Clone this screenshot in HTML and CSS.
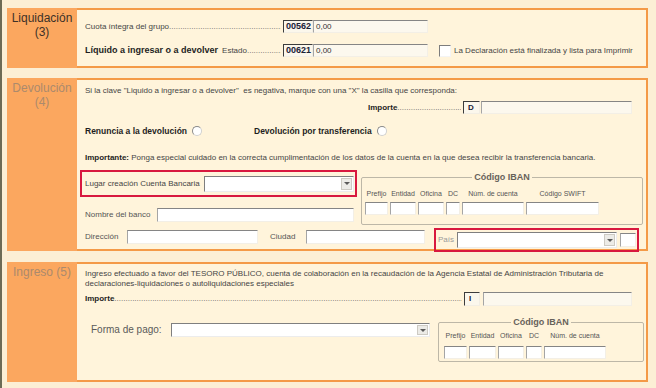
FILE: index.html
```html
<!DOCTYPE html>
<html>
<head>
  <meta charset="utf-8">
  <title>Liquidación, devolución e ingreso</title>
  <link rel="stylesheet" href="styles.css">
</head>
<body>
<div class="page">

  <div class="block">
    <div class="side">Liquidación<br>(3)</div>
    <div class="panel p-liq">
      <div class="row">
        <div class="lead"><span>Cuota íntegra del grupo</span><span class="dots"></span></div>
        <span class="code">00562</span>
        <span class="fld w-val">0,00</span>
      </div>
      <div class="row">
        <div class="lead"><b class="big">Líquido a ingresar o a devolver</b><span class="estado">Estado</span><span class="dots"></span></div>
        <span class="code">00621</span>
        <span class="fld w-val">0,00</span>
        <span class="check"></span>
        <span>La Declaración está finalizada y lista para Imprimir</span>
      </div>
    </div>
  </div>

  <div class="block">
    <div class="side off">Devolución<br>(4)</div>
    <div class="panel p-dev">
      <p class="line">Si la clave "Liquido a ingresar o a devolver" &nbsp;es negativa, marque con una "X" la casilla que corresponda:</p>
      <div class="row imp-dev">
        <div class="lead lead-dev"><b>Importe</b><span class="dots"></span></div>
        <span class="key">D</span>
        <span class="fld w-imp"></span>
      </div>
      <div class="row radios">
        <div class="opt"><b>Renuncia a la devolución</b><span class="radio"></span></div>
        <div class="opt"><b>Devolución por transferencia</b><span class="radio"></span></div>
      </div>
      <p class="line note"><b>Importante:</b> Ponga especial cuidado en la correcta cumplimentación de los datos de la cuenta en la que desea recibir la transferencia bancaria.</p>
      <div class="bank">
        <div class="bank-left">
          <div class="mark lugar">
            <span class="lbl-lugar">Lugar creación Cuenta Bancaria</span>
            <div class="select w-lugar"><span class="arrow"></span></div>
          </div>
          <div class="row nombre">
            <span class="soft lbl-nombre">Nombre del banco</span>
            <span class="fld white w-nombre"></span>
          </div>
        </div>
        <fieldset class="iban iban-dev">
          <legend>Código IBAN</legend>
          <div class="cols">
            <div class="col c-pre"><span>Prefijo</span><span class="fld white"></span></div>
            <div class="col c-ent"><span>Entidad</span><span class="fld white"></span></div>
            <div class="col c-ofi"><span>Oficina</span><span class="fld white"></span></div>
            <div class="col c-dc"><span>DC</span><span class="fld white"></span></div>
            <div class="col c-num"><span>Núm. de cuenta</span><span class="fld white"></span></div>
            <div class="col c-swift"><span>Código SWIFT</span><span class="fld white"></span></div>
          </div>
        </fieldset>
      </div>
      <div class="row dir">
        <span class="soft lbl-dir">Dirección</span>
        <span class="fld white w-dir"></span>
        <span class="soft lbl-ciu">Ciudad</span>
        <span class="fld white w-ciu"></span>
        <div class="mark pais">
          <span class="lbl-pais">País</span>
          <div class="select w-pais"><span class="arrow"></span></div>
          <span class="fld white w-pc"></span>
        </div>
      </div>
    </div>
  </div>

  <div class="block b-ing">
    <div class="side off">Ingreso (5)</div>
    <div class="panel p-ing">
      <p class="line">Ingreso efectuado a favor del TESORO PÚBLICO, cuenta de colaboración en la recaudación de la Agencia Estatal de Administración Tributaria de<br>declaraciones-liquidaciones o autoliquidaciones especiales</p>
      <div class="row imp-ing">
        <div class="lead lead-ing"><b>Importe</b><span class="dots"></span></div>
        <span class="key key-i">I</span>
        <span class="fld w-imp-i"></span>
      </div>
      <div class="pay">
        <div class="row forma">
          <span class="lbl-forma">Forma de pago:</span>
          <div class="select w-forma"><span class="arrow"></span></div>
        </div>
        <fieldset class="iban iban-ing">
          <legend>Código IBAN</legend>
          <div class="cols">
            <div class="col c-pre"><span>Prefijo</span><span class="fld white"></span></div>
            <div class="col c-ent2"><span>Entidad</span><span class="fld white"></span></div>
            <div class="col c-ofi2"><span>Oficina</span><span class="fld white"></span></div>
            <div class="col c-dc2"><span>DC</span><span class="fld white"></span></div>
            <div class="col c-num"><span>Núm. de cuenta</span><span class="fld white"></span></div>
          </div>
        </fieldset>
      </div>
    </div>
  </div>

</div>
</body>
</html>
```

FILE: styles.css
```css
* {
  box-sizing: border-box;
}
body {
  margin: 0;
  background-color: #fcefd5;
  font-family: "Liberation Sans", Arial, sans-serif;
  font-size: 8px;
  line-height: 10px;
  color: #454545;
}
b {
  font-weight: bold;
  color: #1e1e1e;
}
.page {
  border-left: 2px solid #6d6b55;
  height: 388px;
  padding: 8px 0 0 5px;
}

/* bloques: etiqueta naranja + panel */
.block {
  display: flex;
  width: 641px;
}
.block + .block {
  margin-top: 10px;
}
.block.b-ing {
  margin-top: 11px;
}
.side {
  flex: none;
  width: 70px;
  padding-top: 3px;
  background-color: #fba75f;
  color: #3d3128;
  font-size: 12px;
  line-height: 14px;
  text-align: center;
}
.side.off {
  color: #ab8a6d;
}
.panel {
  flex: 1;
  background-color: #fff4db;
  border: 2px solid #f49a47;
  border-left: 0;
  padding: 0 2px 0 8px;
}
.p-liq {
  padding-top: 10px;
  padding-bottom: 9px;
}
.p-dev {
  padding-top: 6px;
  padding-bottom: 5px;
}
.p-ing {
  padding-top: 5px;
  padding-bottom: 18px;
}
.line {
  margin: 0;
  white-space: nowrap;
}

/* filas */
.row {
  display: flex;
  align-items: center;
  white-space: nowrap;
}
.p-liq .row {
  height: 13px;
}
.p-liq .row + .row {
  margin-top: 11px;
}
.lead {
  display: flex;
  align-items: baseline;
  width: 198px;
  overflow: hidden;
  padding-right: 2px;
}
.big {
  font-size: 9px;
}
.estado {
  margin-left: 4px;
}
.dots {
  flex: 1;
  overflow: hidden;
  color: #666;
}
.dots::after {
  content: "..........................................................................................................................................................................................................";
}

/* campos */
.code,
.key {
  height: 13px;
  border: 1px solid #f2eee4;
  border-top-color: #3c3c3c;
  border-left-color: #3c3c3c;
  background-color: #fbf7ec;
  font-weight: bold;
  line-height: 11px;
  color: #1a2238;
}
.code {
  width: 30px;
  padding-left: 2px;
  font-size: 9px;
}
.key {
  width: 17px;
  padding-left: 4px;
}
.fld {
  flex: none;
  height: 13px;
  border: 1px solid #f3efe6;
  border-top-color: #858585;
  border-left-color: #a5a5a5;
  background-color: #fcf8ee;
  line-height: 11px;
  padding-left: 2px;
  color: #333;
}
.fld.white {
  background-color: #fff;
}
.w-val {
  width: 115px;
}
.check {
  flex: none;
  width: 12px;
  height: 12px;
  margin: 0 3px 0 11px;
  border: 1px solid #f4f4f4;
  border-top-color: #7d7d7d;
  border-left-color: #7d7d7d;
  background-color: #fff;
}
.radio {
  flex: none;
  width: 10px;
  height: 10px;
  margin-left: 5px;
  border-radius: 50%;
  border: 1px solid #d0d0d0;
  border-top-color: #8a8a8a;
  border-left-color: #8a8a8a;
  background-color: #fff;
}
.select {
  flex: none;
  display: flex;
  justify-content: flex-end;
  height: 16px;
  padding: 1px;
  border: 1px solid #ececec;
  border-top-color: #7f7f7f;
  border-left-color: #7f7f7f;
  background-color: #fff;
}
.arrow {
  display: flex;
  align-items: center;
  justify-content: center;
  width: 11px;
  background-color: #ecebe7;
  border: 1px solid #cdcac3;
}
.arrow::after {
  content: "";
  border-left: 3px solid transparent;
  border-right: 3px solid transparent;
  border-top: 3px solid #5a5a5a;
}
.soft {
  color: #555;
}

/* devolucion */
.imp-dev {
  margin: 5px 0 0 283px;
  height: 13px;
}
.lead-dev {
  width: 95px;
}
.w-imp {
  width: 151px;
  margin-left: 1px;
}
.radios {
  margin-top: 11px;
  height: 12px;
  font-size: 8.5px;
}
.opt {
  display: flex;
  align-items: center;
  width: 169px;
}
.note {
  margin-top: 16px;
}
.bank {
  display: flex;
  align-items: flex-start;
  margin-top: 7px;
}
.bank-left {
  flex: none;
  width: 272px;
}
.mark {
  display: flex;
  align-items: center;
  border: 2px solid #d8183f;
}
.lugar {
  width: 277px;
  height: 27px;
  margin-left: -5px;
  padding-left: 3px;
}
.lbl-lugar {
  width: 119px;
}
.w-lugar {
  width: 150px;
}
.nombre {
  margin-top: 11px;
  height: 14px;
}
.lbl-nombre {
  width: 72px;
}
.w-nombre {
  width: 197px;
  height: 14px;
}

/* codigo iban */
.iban {
  flex: none;
  min-width: 0;
  margin: 0;
  border: 1px solid #bdb7a7;
  border-radius: 2px;
}
.iban legend {
  margin: 0 auto;
  padding: 0 2px;
  font-weight: bold;
  font-size: 9px;
  line-height: 10px;
  color: #67625a;
}
.iban-dev {
  width: 282px;
  margin: 2px 0 0 4px;
  padding: 7px 3px 9px;
}
.iban-ing {
  width: 206px;
  margin-left: 8px;
  padding: 4px 5px 2px;
}
.cols {
  display: flex;
  gap: 2px;
}
.col {
  display: flex;
  flex-direction: column;
  align-items: center;
}
.col span:first-child {
  font-size: 7px;
  line-height: 10px;
  color: #555;
}
.col .fld {
  width: 100%;
  margin-top: 3px;
}
.iban-ing .col .fld {
  margin-top: 5px;
}
.c-pre { width: 23px; }
.c-ent, .c-ofi { width: 26px; }
.c-dc { width: 14px; }
.c-num { width: 62px; }
.c-swift { width: 73px; }
.c-ent2 { width: 27px; }
.c-ofi2 { width: 26px; }
.c-dc2 { width: 16px; }

.dir {
  margin-top: 5px;
  height: 14px;
}
.dir .fld {
  height: 14px;
}
.lbl-dir {
  width: 42px;
}
.w-dir {
  width: 131px;
}
.lbl-ciu {
  width: 36px;
  margin-left: 12px;
}
.w-ciu {
  width: 119px;
}
.pais {
  width: 205px;
  height: 24px;
  margin: -2px 0 -8px 9px;
  padding-left: 2px;
}
.lbl-pais {
  width: 19px;
  color: #9a9a9a;
}
.w-pais {
  width: 160px;
}
.w-pc {
  width: 16px;
  margin-left: 3px;
}

/* ingreso */
.imp-ing {
  margin-top: 3px;
  height: 14px;
}
.lead-ing {
  width: 379px;
}
.key-i {
  width: 16px;
  height: 14px;
}
.w-imp-i {
  width: 149px;
  height: 14px;
  margin-left: 3px;
}
.pay {
  display: flex;
  align-items: flex-start;
  margin-top: 11px;
}
.forma {
  flex: none;
  margin: 6px 0 0 6px;
  height: 14px;
}
.lbl-forma {
  width: 80px;
  font-size: 10px;
  color: #5a5a5a;
}
.w-forma {
  width: 259px;
  height: 14px;
}
```
